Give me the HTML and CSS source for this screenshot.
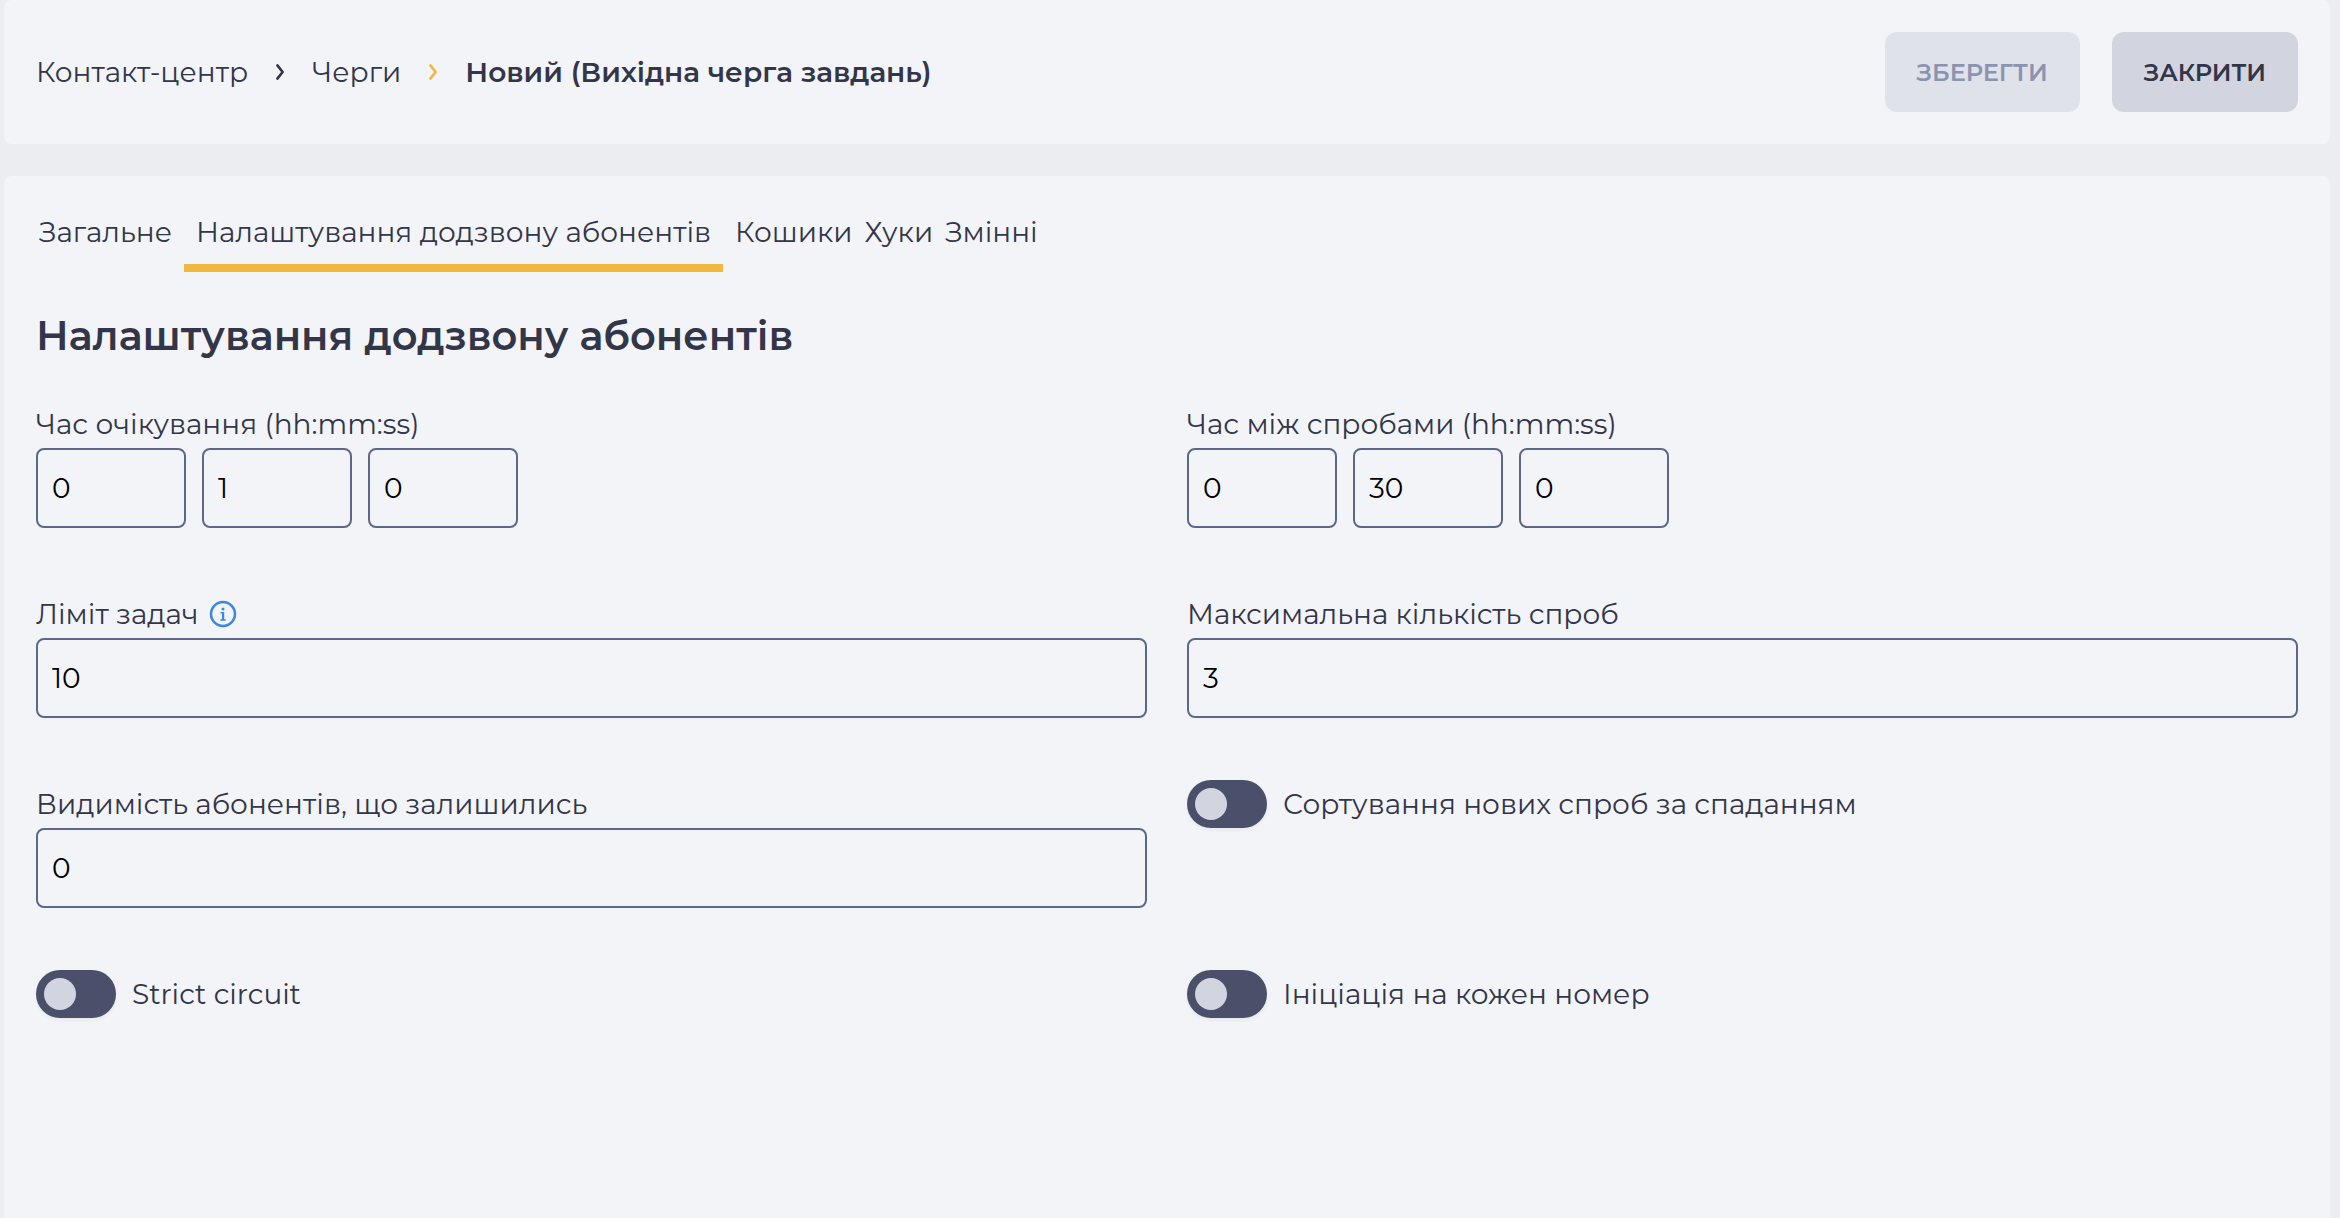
FILE: index.html
```
<!DOCTYPE html>
<html lang="uk">
<head>
    <meta charset="UTF-8">
    <meta name="viewport" content="width=device-width, initial-scale=1.0">
    <title>Новий (Вихідна черга завдань)</title>
    <link rel="stylesheet" href="styles.css">
</head>
<body>
    <header class="page-header">
        <nav class="breadcrumbs">
            <a href="#">Контакт-центр</a>
            <svg class="chevron" viewBox="0 0 32 32"><path d="M13.4 9.4L18.6 16l-5.2 6.6"/></svg>
            <a href="#">Черги</a>
            <svg class="chevron chevron-active" viewBox="0 0 32 32"><path d="M13.4 9.4L18.6 16l-5.2 6.6"/></svg>
            <a href="#" class="current">Новий (Вихідна черга завдань)</a>
        </nav>
        <div class="actions">
            <button type="button" class="btn" disabled>Зберегти</button>
            <button type="button" class="btn">Закрити</button>
        </div>
    </header>

    <main class="panel">
        <nav class="tabs">
            <a href="#" class="tab">Загальне</a>
            <a href="#" class="tab tab-active">Налаштування додзвону абонентів</a>
            <a href="#" class="tab">Кошики</a>
            <a href="#" class="tab">Хуки</a>
            <a href="#" class="tab">Змінні</a>
        </nav>

        <h1>Налаштування додзвону абонентів</h1>

        <form class="form-grid">
            <div class="field">
                <label for="waitHours">Час очікування (hh:mm:ss)</label>
                <div class="time-inputs">
                    <input type="text" id="waitHours" value="0">
                    <input type="text" aria-label="mm" value="1">
                    <input type="text" aria-label="ss" value="0">
                </div>
            </div>
            <div class="field">
                <label for="retryHours">Час між спробами (hh:mm:ss)</label>
                <div class="time-inputs">
                    <input type="text" id="retryHours" value="0">
                    <input type="text" aria-label="mm" value="30">
                    <input type="text" aria-label="ss" value="0">
                </div>
            </div>
            <div class="field">
                <label for="limit">Ліміт задач
                    <svg class="info" viewBox="0 0 32 32">
                        <circle class="ring" cx="16" cy="16" r="12"/>
                        <circle cx="16" cy="11" r="1.5"/>
                        <path d="M13.5 14h3.7v7.3h1.5v1.4h-5.2v-1.4H15v-5.9h-1.5z"/>
                    </svg>
                </label>
                <input type="text" id="limit" value="10">
            </div>
            <div class="field">
                <label for="attempts">Максимальна кількість спроб</label>
                <input type="text" id="attempts" value="3">
            </div>
            <div class="field">
                <label for="visible">Видимість абонентів, що залишились</label>
                <input type="text" id="visible" value="0">
            </div>
            <label class="switcher">
                <input type="checkbox" class="switch">
                Сортування нових спроб за спаданням
            </label>
            <label class="switcher">
                <input type="checkbox" class="switch">
                Strict circuit
            </label>
            <label class="switcher">
                <input type="checkbox" class="switch">
                Ініціація на кожен номер
            </label>
        </form>
    </main>
</body>
</html>
```
FILE: styles.css
```
/* Global Styles */
* {
    box-sizing: border-box;
}

body {
    font-family: Montserrat, Inter, sans-serif;
    font-size: 28px;
    line-height: 48px;
    color: #323648;
    background-color: #ecedf1;
    margin: 0;
    padding: 0 10px 0 4px;
    min-height: 100vh;
    display: flex;
    flex-direction: column;
    gap: 32px;
}

a {
    color: inherit;
    text-decoration: none;
}

/* Header Styles */
.page-header {
    display: flex;
    justify-content: space-between;
    align-items: center;
    padding: 32px;
    background-color: #f3f4f8;
    border-radius: 8px;
}

.breadcrumbs {
    display: flex;
    align-items: center;
    gap: 16px;
}

.breadcrumbs .current {
    font-weight: 600;
}

.chevron {
    width: 32px;
    height: 32px;
    fill: none;
    stroke: #323648;
    stroke-width: 2.6;
    stroke-linecap: round;
    stroke-linejoin: round;
}

.chevron-active {
    stroke: #f0b840;
}

.actions {
    display: flex;
    gap: 32px;
}

.btn {
    height: 80px;
    padding: 0 32px;
    border: none;
    border-radius: 12px;
    font-family: inherit;
    font-size: 24px;
    font-weight: 600;
    text-transform: uppercase;
    color: #323648;
    background-color: #d2d4e0;
    cursor: pointer;
}

.btn:disabled {
    color: #8b93b1;
    background-color: #e0e2ea;
    cursor: default;
}

/* Panel Styles */
.panel {
    flex: 1;
    padding: 32px;
    background-color: #f3f4f8;
    border-radius: 8px 8px 0 0;
}

.tabs {
    display: flex;
    gap: 12px;
    padding: 0 3px;
}

.tab {
    padding-bottom: 8px;
    border-bottom: 8px solid transparent;
}

.tab-active {
    padding: 0 12px 8px;
    border-color: #f0b840;
}

h1 {
    margin: 32px 0;
    font-size: 40px;
    line-height: 64px;
    font-weight: 600;
}

/* Form Styles */
.form-grid {
    display: grid;
    grid-template-columns: 1fr 1fr;
    gap: 62px 40px;
    align-items: start;
}

.field label {
    display: flex;
    align-items: center;
    gap: 8px;
}

.field input {
    display: block;
    width: 100%;
    height: 80px;
    padding: 0 14px;
    border: 2px solid #5d6789;
    border-radius: 8px;
    background: transparent;
    font-family: inherit;
    font-size: 28px;
    color: #000;
}

.time-inputs {
    display: flex;
    gap: 16px;
}

.time-inputs input {
    width: 150px;
}

.info {
    width: 32px;
    height: 32px;
    fill: #3d85e0;
}

.info .ring {
    fill: none;
    stroke: #3d85e0;
    stroke-width: 2.5;
}

/* Switcher Styles */
.switcher {
    display: flex;
    align-items: center;
    gap: 16px;
}

.switch {
    appearance: none;
    width: 80px;
    height: 48px;
    margin: 0;
    padding: 8px;
    border-radius: 24px;
    background-color: #4a5069;
    box-shadow: 0 2px 4px rgba(0, 0, 0, 0.05);
    cursor: pointer;
}

.switch::before {
    content: "";
    display: block;
    width: 32px;
    height: 32px;
    border-radius: 50%;
    background-color: #d2d4e0;
}

.switch:checked::before {
    margin-left: auto;
}
```
